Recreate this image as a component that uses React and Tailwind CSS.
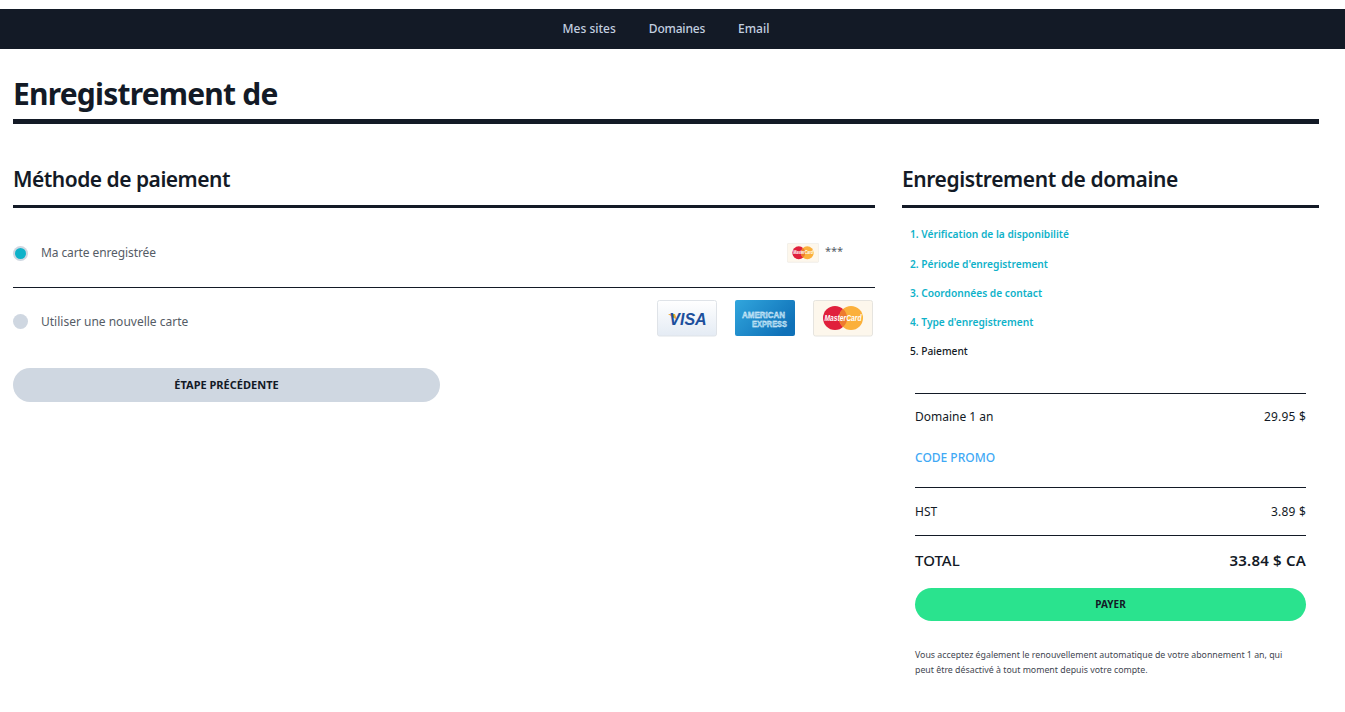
import React from 'react';

const VisaCard = () => (
  <svg width="60" height="37" viewBox="0 0 60 37" aria-label="Visa">
    <defs>
      <linearGradient id="visaBg" x1="0" y1="0" x2="0" y2="1">
        <stop offset="0" stopColor="#ffffff" />
        <stop offset="1" stopColor="#e4ebf4" />
      </linearGradient>
    </defs>
    <rect x="0.5" y="0.5" width="59" height="35.5" rx="2" fill="url(#visaBg)" stroke="#dfe3e8" />
    <path d="M11 14h7l2 6z" fill="#eeaa33" />
    <text x="31" y="24.5" textAnchor="middle" fontFamily="Liberation Sans, sans-serif" fontWeight="700" fontStyle="italic" fontSize="16" fill="#1c4f9c">VISA</text>
  </svg>
);

const AmexCard = () => (
  <svg width="60" height="37" viewBox="0 0 60 37" aria-label="American Express">
    <defs>
      <linearGradient id="amexBg" x1="0" y1="0" x2="1" y2="0.6">
        <stop offset="0" stopColor="#31a6dd" />
        <stop offset="1" stopColor="#0f71b8" />
      </linearGradient>
    </defs>
    <rect x="0" y="0" width="60" height="36" rx="2" fill="url(#amexBg)" />
    <text x="7" y="18" fontFamily="Liberation Sans, sans-serif" fontWeight="700" fontSize="9" textLength="43" lengthAdjust="spacingAndGlyphs" fill="#7fc4ea" stroke="#f2f9fd" strokeWidth="0.35">AMERICAN</text>
    <text x="17" y="27" fontFamily="Liberation Sans, sans-serif" fontWeight="700" fontSize="9" textLength="35" lengthAdjust="spacingAndGlyphs" fill="#7fc4ea" stroke="#f2f9fd" strokeWidth="0.35">EXPRESS</text>
  </svg>
);

const MasterCard = ({ small }) => (
  <svg width={small ? 32 : 60} height={small ? 20 : 37} viewBox="0 0 60 37" aria-label="MasterCard">
    <rect x="0.5" y="0.5" width="59" height="35.5" rx="2" fill="#fdf7ec" stroke="#e6e4df" />
    <circle cx="22" cy="18" r="12" fill="#e0203c" />
    <circle cx="38" cy="18" r="12" fill="#fbb03b" />
    <path d="M30 9a12 12 0 0 1 0 18a12 12 0 0 1 0-18z" fill="#ee7a2f" />
    <text x="30" y="21" textAnchor="middle" fontFamily="Liberation Sans, sans-serif" fontWeight="700" fontStyle="italic" fontSize="8.5" textLength="37" lengthAdjust="spacingAndGlyphs" fill="#ffffff">MasterCard</text>
  </svg>
);

const Radio = ({ checked }) => (
  <span className="flex h-[15px] w-[15px] shrink-0 items-center justify-center rounded-full bg-[#cfd7e1]">
    {checked && <span className="h-[11px] w-[11px] rounded-full bg-[#0fb2c9]" />}
  </span>
);

const steps = [
  '1. Vérification de la disponibilité',
  "2. Période d'enregistrement",
  '3. Coordonnées de contact',
  "4. Type d'enregistrement",
];

export default function App() {
  return (
    <div className="min-h-[712px] bg-white pt-[9px] font-['Noto_Sans',sans-serif] text-[#131a26]">
      <nav className="flex h-10 items-center justify-center gap-[33px] bg-[#131a26] pr-[13px] text-xs font-medium text-[#c3d0e0]">
        <a>Mes sites</a>
        <a className="tracking-[-0.2px]">Domaines</a>
        <a>Email</a>
      </nav>

      <div className="px-[13px] pr-[26px]">
        <h1 className="flex h-[75px] items-center border-b-[5px] border-[#131a26] pt-[18px] text-[30px] font-bold tracking-[-0.8px]">
          Enregistrement de
        </h1>

        <div className="mt-[32px] flex gap-[27px]">
          <main className="w-[862px] shrink-0">
            <h2 className="flex h-[52px] items-center border-b-[3px] border-[#131a26] pb-[1px] text-[21px] font-semibold tracking-[-0.5px]">
              Méthode de paiement
            </h2>

            <div className="flex h-[80px] items-center gap-[13px] border-b border-[#131a26] pt-[11px] text-xs tracking-[-0.1px] text-[#555c66]">
              <Radio checked />
              <span>Ma carte enregistrée</span>
              <span className="ml-auto mr-[32px] flex items-center gap-[6px]">
                <MasterCard small />
                <span className="mb-1 text-[11px]">***</span>
              </span>
            </div>

            <div className="flex h-[67px] items-center gap-[13px] text-xs text-[#555c66]">
              <Radio />
              <span>Utiliser une nouvelle carte</span>
              <span className="mb-[7px] ml-auto mr-[2px] flex items-center gap-[18px]">
                <VisaCard />
                <AmexCard />
                <MasterCard />
              </span>
            </div>

            <button className="mt-[13px] h-[34px] w-[427px] rounded-full bg-[#cfd7e1] text-[11px] font-bold">
              ÉTAPE PRÉCÉDENTE
            </button>
          </main>

          <aside className="w-[417px] shrink-0">
            <h2 className="flex h-[52px] items-center border-b-[3px] border-[#131a26] pb-[1px] text-[21px] font-semibold tracking-[-0.4px]">
              Enregistrement de domaine
            </h2>

            <ol className="flex flex-col gap-[13px] px-2 pt-[18px] text-[10.2px] font-semibold leading-4 text-[#0fb2c9]">
              {steps.map((step, i) => (
                <li key={step} className={i === 0 ? 'mb-px' : ''}>{step}</li>
              ))}
              <li className="font-medium text-[#131a26]">5. Paiement</li>
            </ol>

            <div className="mx-[13px] mt-[34px]">
              <div className="h-[95px] border-y border-[#131a26] pt-[15px] text-xs">
                <div className="flex justify-between leading-4">
                  <span>Domaine 1 an</span>
                  <span className="tracking-[0.2px]">29.95 $</span>
                </div>
                <button className="mt-[25px] block text-xs font-medium leading-4 text-[#3fa9f5]">CODE PROMO</button>
              </div>
              <div className="flex h-[48px] items-center justify-between border-b border-[#131a26] text-xs">
                <span>HST</span>
                <span className="tracking-[0.2px]">3.89 $</span>
              </div>
              <div className="flex h-[52px] items-center justify-between pb-[4px] text-[15px] font-medium">
                <span>TOTAL</span>
                <span className="font-semibold tracking-[0.2px]">33.84 $ CA</span>
              </div>
              <button className="h-[33px] w-full rounded-full bg-[#2ae38e] text-[10px] font-bold">PAYER</button>
              <p className="mt-[27px] pr-2 text-[8.8px] leading-[15px] text-[#3f4650]">
                Vous acceptez également le renouvellement automatique de votre abonnement 1 an, qui peut être désactivé à tout moment depuis votre compte.
              </p>
            </div>
          </aside>
        </div>
      </div>
    </div>
  );
}
